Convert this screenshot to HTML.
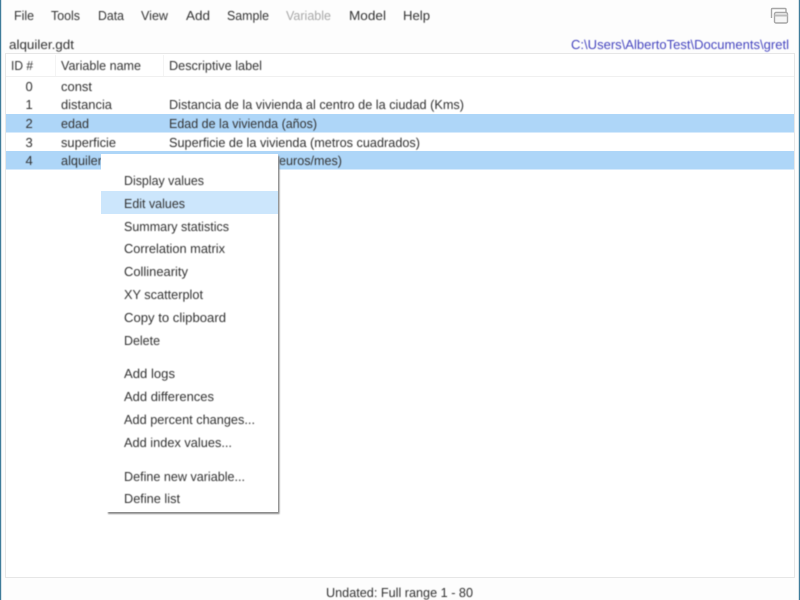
<!DOCTYPE html>
<html>
<head>
<meta charset="utf-8">
<title>gretl</title>
<style>
html,body{margin:0;padding:0;width:800px;height:600px;overflow:hidden;background:#fdfdfd}
svg{display:block}
text{font-family:"Liberation Sans",sans-serif;font-size:13px;fill:#333;filter:url(#b);text-rendering:geometricPrecision}
</style>
</head>
<body>
<svg width="800" height="600" viewBox="0 0 800 600" xmlns="http://www.w3.org/2000/svg">
<defs>
<filter id="b" x="-5%" y="-30%" width="110%" height="160%"><feGaussianBlur stdDeviation="0.4"/></filter>
<filter id="s" x="-10%" y="-10%" width="120%" height="120%"><feGaussianBlur stdDeviation="0.9"/></filter>
</defs>
<rect width="800" height="600" fill="#fdfdfd"/>
<rect x="0" y="0" width="1.2" height="600" fill="#3f7c9a"/>
<rect x="798.8" y="0" width="1.2" height="600" fill="#3f7c9a"/>

<!-- menu bar -->
<g>
<text x="14" y="20" textLength="20" lengthAdjust="spacingAndGlyphs">File</text>
<text x="51" y="20" textLength="29" lengthAdjust="spacingAndGlyphs">Tools</text>
<text x="98" y="20" textLength="26" lengthAdjust="spacingAndGlyphs">Data</text>
<text x="141" y="20" textLength="27" lengthAdjust="spacingAndGlyphs">View</text>
<text x="186" y="20" textLength="24" lengthAdjust="spacingAndGlyphs">Add</text>
<text x="227" y="20" textLength="42" lengthAdjust="spacingAndGlyphs">Sample</text>
<text x="286" y="20" textLength="45" lengthAdjust="spacingAndGlyphs" style="fill:#a8a8a8">Variable</text>
<text x="349" y="20" textLength="37" lengthAdjust="spacingAndGlyphs">Model</text>
<text x="403" y="20" textLength="27" lengthAdjust="spacingAndGlyphs">Help</text>
</g>

<!-- window icon -->
<g fill="none" stroke="#a6a6a6" stroke-width="1.4">
<path d="M771.5 18V9.5Q771.5 8.5 772.5 8.5H785Q786 8.5 786 9.5V12"/>
<rect x="774.5" y="12.5" width="13" height="10.5" rx="1.5" fill="#f6f6f6"/>
<path d="M774.5 15.5H787.5" stroke="#bcbcbc" stroke-width="2"/>
</g>

<!-- file / path -->
<text x="9" y="49" textLength="65" lengthAdjust="spacingAndGlyphs">alquiler.gdt</text>
<text x="571" y="49" textLength="218" lengthAdjust="spacingAndGlyphs" style="fill:#4545bf">C:\Users\AlbertoTest\Documents\gretl</text>

<!-- list panel -->
<rect x="5.5" y="53.5" width="789" height="524" fill="#ffffff" stroke="#e6e6e6"/>
<rect x="6" y="76" width="788" height="1" fill="#f0f0f0"/>
<rect x="55" y="55" width="1" height="21" fill="#f4f4f4"/>
<rect x="163" y="55" width="1" height="21" fill="#f4f4f4"/>

<text x="11" y="70" textLength="22" lengthAdjust="spacingAndGlyphs">ID #</text>
<text x="61" y="70" textLength="80" lengthAdjust="spacingAndGlyphs">Variable name</text>
<text x="169" y="70" textLength="93" lengthAdjust="spacingAndGlyphs">Descriptive label</text>

<!-- selected rows -->
<rect x="6" y="114" width="788" height="18.5" fill="#aed6f8"/>
<rect x="6" y="151" width="788" height="18.5" fill="#aed6f8"/>

<!-- rows -->
<text x="25.5" y="91">0</text>
<text x="61" y="91" textLength="31" lengthAdjust="spacingAndGlyphs">const</text>

<text x="25.5" y="109">1</text>
<text x="61" y="109" textLength="51" lengthAdjust="spacingAndGlyphs">distancia</text>
<text x="169" y="109" textLength="295" lengthAdjust="spacingAndGlyphs">Distancia de la vivienda al centro de la ciudad (Kms)</text>

<text x="25.5" y="128">2</text>
<text x="61" y="128" textLength="28" lengthAdjust="spacingAndGlyphs">edad</text>
<text x="169" y="128" textLength="148" lengthAdjust="spacingAndGlyphs">Edad de la vivienda (años)</text>

<text x="25.5" y="147">3</text>
<text x="61" y="147" textLength="55" lengthAdjust="spacingAndGlyphs">superficie</text>
<text x="169" y="147" textLength="251" lengthAdjust="spacingAndGlyphs">Superficie de la vivienda (metros cuadrados)</text>

<text x="25.5" y="165">4</text>
<text x="61" y="165" textLength="41" lengthAdjust="spacingAndGlyphs">alquiler</text>
<text x="279" y="165" textLength="63" lengthAdjust="spacingAndGlyphs">euros/mes)</text>

<!-- context menu -->
<rect x="108" y="156" width="171.5" height="358" fill="#8a8a8a" filter="url(#s)"/>
<rect x="101" y="154" width="177" height="358" fill="#ffffff"/>
<rect x="101" y="191" width="177" height="23" fill="#cce6fc"/>

<text x="124" y="185" textLength="80" lengthAdjust="spacingAndGlyphs">Display values</text>
<text x="124" y="208" textLength="61" lengthAdjust="spacingAndGlyphs">Edit values</text>
<text x="124" y="231" textLength="105" lengthAdjust="spacingAndGlyphs">Summary statistics</text>
<text x="124" y="253" textLength="101" lengthAdjust="spacingAndGlyphs">Correlation matrix</text>
<text x="124" y="276" textLength="64" lengthAdjust="spacingAndGlyphs">Collinearity</text>
<text x="124" y="299" textLength="79" lengthAdjust="spacingAndGlyphs">XY scatterplot</text>
<text x="124" y="322" textLength="102" lengthAdjust="spacingAndGlyphs">Copy to clipboard</text>
<text x="124" y="345" textLength="36" lengthAdjust="spacingAndGlyphs">Delete</text>
<text x="124" y="378" textLength="51" lengthAdjust="spacingAndGlyphs">Add logs</text>
<text x="124" y="401" textLength="90" lengthAdjust="spacingAndGlyphs">Add differences</text>
<text x="124" y="424" textLength="131" lengthAdjust="spacingAndGlyphs">Add percent changes...</text>
<text x="124" y="447" textLength="108" lengthAdjust="spacingAndGlyphs">Add index values...</text>
<text x="124" y="481" textLength="121" lengthAdjust="spacingAndGlyphs">Define new variable...</text>
<text x="124" y="503" textLength="56" lengthAdjust="spacingAndGlyphs">Define list</text>

<!-- status -->
<text x="326" y="597" textLength="147" lengthAdjust="spacingAndGlyphs">Undated: Full range 1 - 80</text>
</svg>
</body>
</html>
